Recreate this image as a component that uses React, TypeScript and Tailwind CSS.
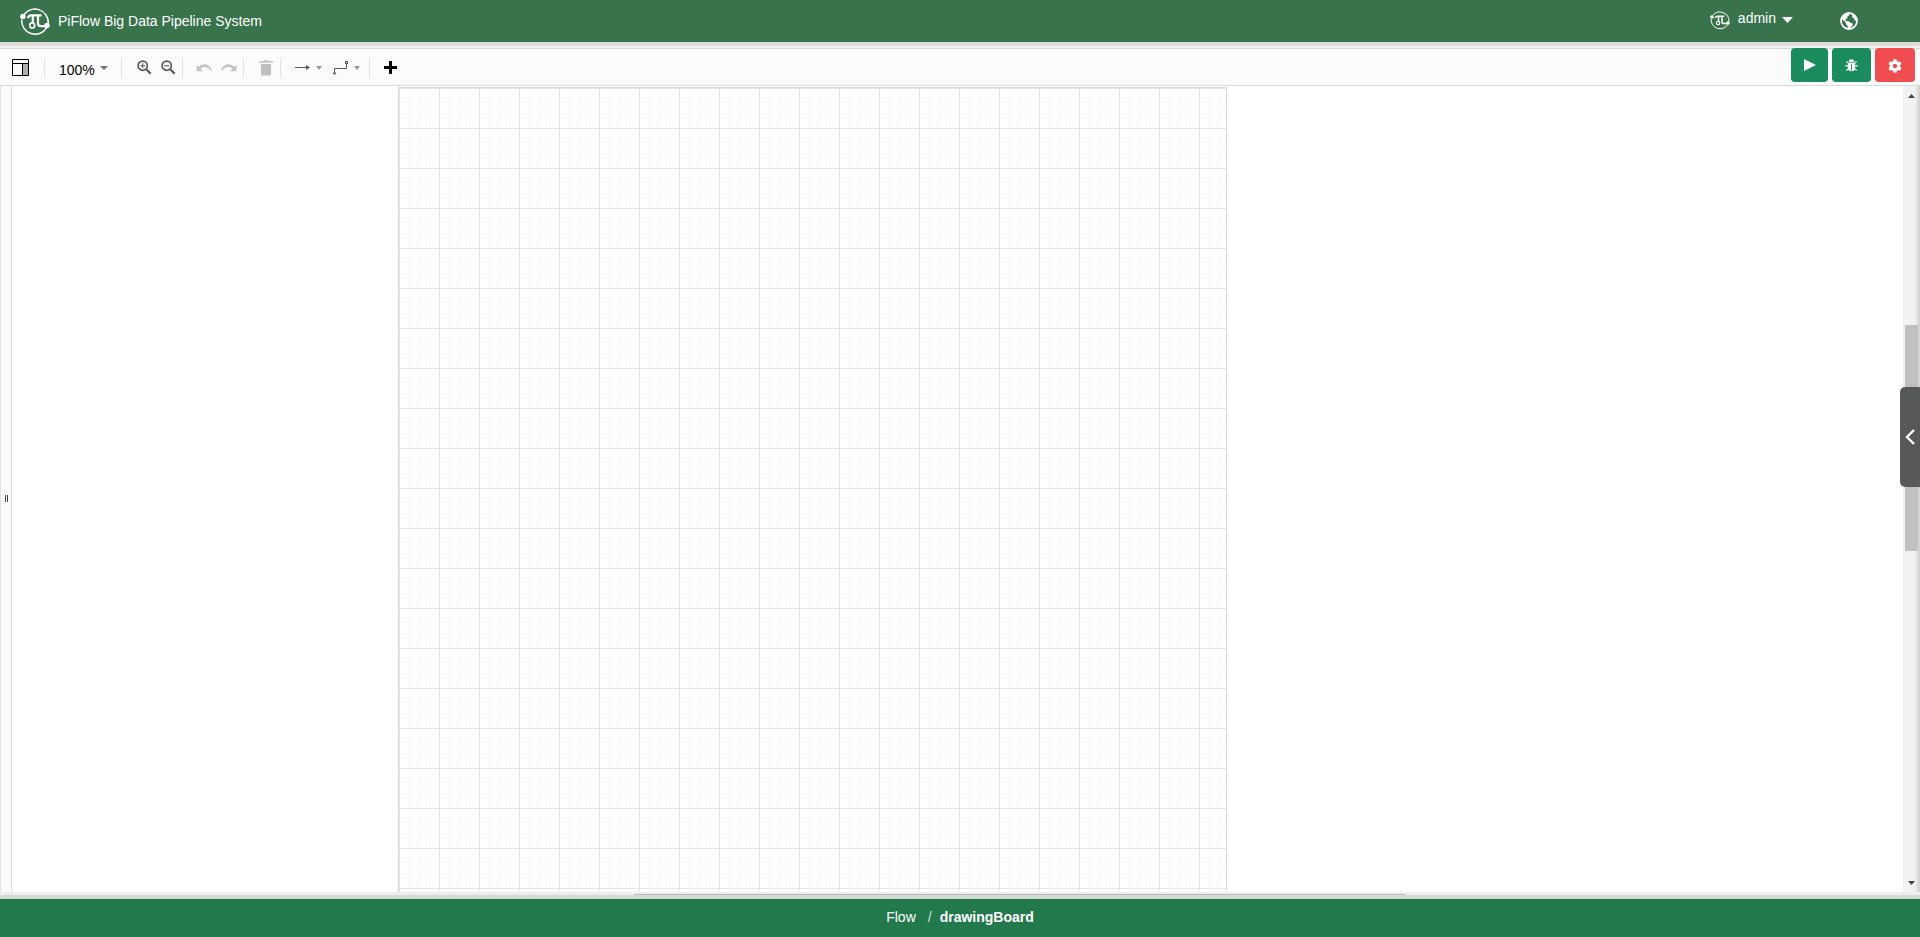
import type { ReactNode } from "react";
import { FaCog } from "react-icons/fa";

function Logo({ className }: { className: string }) {
  return (
    <svg viewBox="0 0 30 30" className={className} fill="none" stroke="currentColor" aria-hidden="true">
      <path d="M4 8.5A13.5 13.5 0 0 1 28.3 17.5" strokeWidth="1.5" />
      <path d="M1.7 13.5A13.5 13.5 0 0 0 26.5 22" strokeWidth="1.5" />
      <circle cx="2.9" cy="10.5" r="2.7" fill="currentColor" stroke="none" />
      <circle cx="27" cy="19.5" r="2.7" fill="currentColor" stroke="none" />
      <path d="M8 12.2Q8.6 9.4 11 9.4H21.5" strokeWidth="2.4" />
      <path d="M12.8 10v7.5M18 10v7.5Q18 20.2 21 20.2H26" strokeWidth="2.2" />
      <circle cx="12.2" cy="19.4" r="2.5" strokeWidth="1.7" />
    </svg>
  );
}

function Globe() {
  return (
    <svg viewBox="0 0 18 18" className="size-[18px]" fill="currentColor" aria-hidden="true">
      <circle cx="9" cy="9" r="8" fill="none" stroke="currentColor" strokeWidth="1.8" />
      <path d="M2.500 4.500L6 1.500l3.500.3-.5 1.700-1.800 1 .3 1.500-2 1.500.5 1.500 2.500.3 2.500 1.700 2 .8-.8 2.200-1.700 1.500-.8 1.800-1.700-.3-.3-3-1.700-2-.5-2L3.500 8.500 1.500 7z" />
      <path d="M12 2.500l3.500 2.500 1 4-1.700-.5-.8-2.200-1.700-.8z" />
    </svg>
  );
}

function Caret({ className }: { className: string }) {
  return (
    <svg viewBox="0 0 8 4" className={className} fill="currentColor" preserveAspectRatio="none" aria-hidden="true">
      <path d="M0 0h8L4 4z" />
    </svg>
  );
}

function Magnifier({ plus }: { plus?: boolean }) {
  return (
    <svg viewBox="0 0 15 15" className="size-[15px]" fill="none" stroke="#5a5a5a" aria-hidden="true">
      <circle cx="5.7" cy="5.7" r="4.6" strokeWidth="1.7" />
      <path d="M9.2 9.2L13.700 13.700" strokeWidth="2.2" />
      <path d="M3.3 5.7h4.8" strokeWidth="1.1" />
      {plus && <path d="M5.7 3.3v4.8" strokeWidth="1.1" />}
    </svg>
  );
}

function CurvedArrow({ flip }: { flip?: boolean }) {
  return (
    <svg viewBox="0 0 16 8" className="h-2 w-4" fill="#c4c4c4" aria-hidden="true">
      <path
        transform={flip ? "translate(16 0) scale(-1 1)" : undefined}
        d="M.5 .8l2.200 2.200C4.300 1.200 6.200 .3 8.500 .3c3.600 0 6.200 2.200 7.300 6l-1.200.5C13.300 4.300 11.200 3 8.500 3c-1.600 0-2.900.5-4 1.600L7 7.200H.5z"
      />
    </svg>
  );
}

function Tool({ label, children, disabled }: { label: string; children: ReactNode; disabled?: boolean }) {
  return (
    <button type="button" aria-label={label} title={label} disabled={disabled} className="flex items-center gap-[5px]">
      {children}
    </button>
  );
}

function Separator() {
  return <span className="h-5 w-px bg-[#e2e2e2]" />;
}

function Header() {
  return (
    <header className="flex h-[42px] shrink-0 items-center justify-between bg-[#38734c] pr-[62px] pl-5 text-white">
      <a href="#home" className="flex items-center gap-2">
        <Logo className="size-[30px]" />
        <span>PiFlow Big Data Pipeline System</span>
      </a>
      <div className="flex items-center gap-[47px]">
        <button type="button" className="flex items-center gap-2 pb-[6px]">
          <Logo className="mt-1 size-5" />
          <span>admin</span>
          <Caret className="mt-1 ml-[-2px] h-[6px] w-[11px]" />
        </button>
        <button type="button" aria-label="Language">
          <Globe />
        </button>
      </div>
    </header>
  );
}

function Toolbar() {
  return (
    <div className="flex h-[38px] shrink-0 items-start justify-between border-b border-[#d5dbd9] bg-[#fbfbfb] pr-[5px] shadow-[inset_0_1px_0_#d3dbd9]">
      <div className="flex h-full items-center pt-[2px] text-black">
        <div className="w-11 pl-3">
          <Tool label="Format">
            <svg viewBox="0 0 18 18" className="size-[18px]" aria-hidden="true">
              <path d="M11 5h5v11h-5z" fill="#b0b0b0" />
              <path d="M.5 .5h16v16H.5zM.5 4.500h16M10.500 4.500v12" fill="none" stroke="#000" />
            </svg>
          </Tool>
        </div>
        <Separator />
        <div className="w-[76px] pt-1 pl-[14px]">
          <button type="button" className="flex items-center gap-[5px]">
            100%
            <Caret className="mb-1 h-1 w-2 text-[#707070]" />
          </button>
        </div>
        <Separator />
        <div className="flex w-[60px] gap-[9px] pl-[15px]">
          <Tool label="Zoom In">
            <Magnifier plus />
          </Tool>
          <Tool label="Zoom Out">
            <Magnifier />
          </Tool>
        </div>
        <Separator />
        <div className="flex w-[60px] gap-[9px] pl-[13px]">
          <Tool label="Undo" disabled>
            <CurvedArrow />
          </Tool>
          <Tool label="Redo" disabled>
            <CurvedArrow flip />
          </Tool>
        </div>
        <Separator />
        <div className="w-9 pl-[15px]">
          <Tool label="Delete" disabled>
            <svg viewBox="0 0 14 16" className="h-4 w-[14px]" fill="#c0c0c0" aria-hidden="true">
              <path d="M0 1.200h4L5.200 .3h3.600L10 1.200h4v1.500H0zM2 4h10v11.500H2z" />
            </svg>
          </Tool>
        </div>
        <Separator />
        <div className="flex w-[88px] gap-[10px] pl-[13px]">
          <Tool label="Connection">
            <svg viewBox="0 0 17 16" className="h-4 w-[17px]" aria-hidden="true">
              <path d="M1 7.500h13" stroke="#555" />
              <path d="M12 5l4 2.500-4 2.500z" fill="#555" />
            </svg>
            <Caret className="h-1 w-[6px] text-[#999]" />
          </Tool>
          <Tool label="Waypoints">
            <svg viewBox="0 0 17 16" className="h-4 w-[17px]" fill="none" stroke="#555" aria-hidden="true">
              <path d="M2.500 14V8.500h12V4" />
              <rect x="13.500" y="1.500" width="2" height="2" />
              <path d="M1.300 14.500l1.200-3 1.200 3" />
            </svg>
            <Caret className="h-1 w-[6px] text-[#999]" />
          </Tool>
        </div>
        <Separator />
        <div className="pl-[14px]">
          <Tool label="Insert">
            <svg viewBox="0 0 13 13" className="size-[13px]" aria-hidden="true">
              <path d="M5 0h3v5h5v3H8v5H5V8H0V5h5z" />
            </svg>
          </Tool>
        </div>
      </div>
      <div className="flex gap-1 text-white">
        <button type="button" aria-label="Run" className="flex h-[34px] w-[37px] items-center justify-center rounded bg-[#1a8c5e]">
          <svg viewBox="0 0 12 12" className="size-3" fill="currentColor" aria-hidden="true">
            <path d="M0 0l12 6-12 6z" />
          </svg>
        </button>
        <button type="button" aria-label="Debug" className="flex h-[34px] w-[39px] items-center justify-center rounded bg-[#1a8c5e]">
          <svg viewBox="0 0 14 14" className="size-[13px]" fill="none" stroke="currentColor" aria-hidden="true">
            <path d="M4 3.200a3 3 0 0 1 6 0z" fill="currentColor" stroke="none" />
            <path d="M3.200 4h7.600v5.500a3.800 3.800 0 0 1-7.600 0z" fill="currentColor" stroke="none" />
            <path d="M1.500 2.500L4 5M12.500 2.500L10 5M.3 7.500h3.200M13.700 7.500h-3.200M1.500 12.500L4 10M12.500 12.500L10 10" strokeWidth="1.300" />
            <path d="M7 5.500v7" stroke="#1a8c5e" />
          </svg>
        </button>
        <button type="button" aria-label="Settings" className="flex h-[34px] w-10 items-center justify-center rounded bg-[#f04d50]">
          <FaCog className="mt-[2px] size-[14px]" />
        </button>
      </div>
    </div>
  );
}

function Canvas() {
  return (
    <main className="relative flex min-h-0 flex-1">
      <div className="flex w-3 shrink-0 items-center justify-center border-r border-l border-[#e3e3e3] bg-[#fbfbfb]">
        <span className="mt-[19px] h-[7px] w-[3px] border-r border-l border-[#444]" />
      </div>
      <div className="flex-1 pt-px pl-[20.1%]">
        <div className="h-full w-[829px] border-x border-t border-[#d9d9d9] bg-[linear-gradient(#e6e6e6_1px,transparent_1px),linear-gradient(90deg,#e4e4e4_1px,transparent_1px),linear-gradient(#f8f8f8_1px,transparent_1px),linear-gradient(90deg,#f8f8f8_1px,transparent_1px)] bg-size-[40px_40px,40px_40px,10px_10px,10px_10px]" />
      </div>
      <div className="flex w-[17px] shrink-0 flex-col items-center justify-between bg-linear-to-r from-[#f3f2f2] from-70% to-[#d0cdcd] pt-2 pb-[7px] text-[#444]">
        <Caret className="h-1 w-[7px] rotate-180" />
        <span className="mt-[-104px] h-[226px] w-[13px] bg-[#c1bfc0]" />
        <Caret className="h-1 w-[7px]" />
      </div>
      <button
        type="button"
        aria-label="Open panel"
        className="absolute top-[301px] right-0 flex h-[100px] w-5 items-center justify-end rounded-l-[5px] bg-[#575958] pr-[5px] text-white"
      >
        <svg viewBox="0 0 10 16" className="h-4 w-[10px]" fill="none" stroke="currentColor" strokeWidth="2.400" aria-hidden="true">
          <path d="M9 1L2 8l7 7" />
        </svg>
      </button>
    </main>
  );
}

export default function App() {
  return (
    <div className="flex h-screen flex-col overflow-hidden bg-white font-['Liberation_Sans',Arial,sans-serif] text-[14px] leading-5">
      <Header />
      <div className="h-[6px] shrink-0 border-t-4 border-[#dfdbd9] bg-[#eef3f2]" />
      <Toolbar />
      <Canvas />
      <div className="flex h-[3px] shrink-0 items-end bg-[#eeeeee] pl-[33%]">
        <div className="h-px w-[60%] bg-[#b9bbba]" />
      </div>
      <div className="h-1 shrink-0 border-b-2 border-[#c9ddd0] bg-[#d9d9d9]" />
      <footer className="flex h-[38px] shrink-0 items-center justify-center border-t-2 border-[#2a7450] bg-[#22794c] pb-1 text-white">
        <nav aria-label="Breadcrumb" className="flex">
          <a href="#flow">Flow</a>
          <span className="pr-2 pl-3 text-[#d0e0d6]">/</span>
          <b>drawingBoard</b>
        </nav>
      </footer>
    </div>
  );
}
